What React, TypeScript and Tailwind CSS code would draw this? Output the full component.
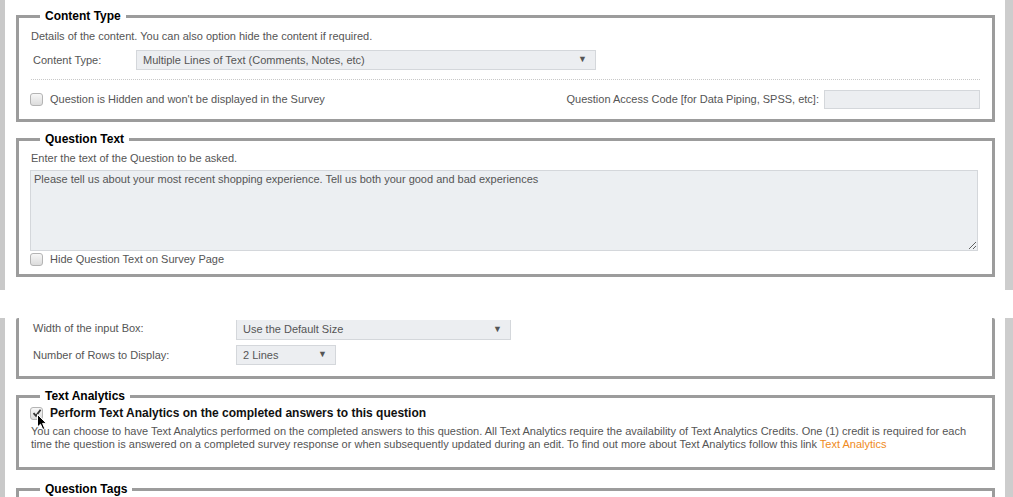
import React from 'react';

const Select = ({ value, width, noTop = false }: { value: string; width: string; noTop?: boolean }) => (
  <div
    className={`${width} ${noTop ? 'border-t-0' : ''} flex h-[20px] items-center justify-between border border-[#d4d7db] bg-[#eceef1] pl-[6px] pr-[8px] text-[11px] text-[#555]`}
  >
    <span>{value}</span>
    <span className="text-[9px] text-[#555]">▼</span>
  </div>
);

const Checkbox = ({ checked = false }: { checked?: boolean }) => (
  <span className="relative flex h-[13px] w-[13px] shrink-0 items-center justify-center rounded-[3px] border border-[#b4b4b4] bg-gradient-to-b from-[#f7f7f7] to-[#dcdcdc]">
    {checked && (
      <svg width="10" height="10" viewBox="0 0 10 10">
        <path d="M1.5 5.2 L4 7.8 L8.6 1.8" fill="none" stroke="#333" strokeWidth="1.8" />
      </svg>
    )}
  </span>
);

const Legend = ({ children }: { children: React.ReactNode }) => (
  <legend className="ml-[9px] px-[5px] text-[12px] font-bold leading-[16px] text-black">{children}</legend>
);

export default function App() {
  return (
    <div className="h-[497px] overflow-hidden bg-white font-['Liberation_Sans',Arial,sans-serif] text-[11px] text-[#555]">
      {/* first capture */}
      <div className="flex h-[290px]">
        <div className="w-[5px] bg-[#c9c9c9]" />
        <div className="ml-[11px] mr-[10px] flex-1 pt-[8px]">
          <fieldset className="border-[3px] border-[#9c9c9c] px-[12px] pb-[10px]">
            <Legend>Content Type</Legend>
            <div className="mt-[4px] leading-[16px]">
              Details of the content. You can also option hide the content if required.
            </div>
            <div className="mt-[6px] flex h-[20px] items-center">
              <span className="ml-[2px] w-[103px]">Content Type:</span>
              <Select value="Multiple Lines of Text (Comments, Notes, etc)" width="w-[460px]" />
            </div>
            <div className="mt-[9px] border-t border-dotted border-[#c8c8c8]" />
            <div className="mt-[9px] flex h-[20px] items-center justify-between">
              <div className="-ml-[1px] flex items-center gap-[7px]">
                <Checkbox />
                <span>Question is Hidden and won't be displayed in the Survey</span>
              </div>
              <div className="flex items-center">
                <span>Question Access Code [for Data Piping, SPSS, etc]:</span>
                <div className="ml-[5px] h-[19px] w-[156px] border border-[#d4d7db] bg-[#eceef1]" />
              </div>
            </div>
          </fieldset>

          <fieldset className="mt-[9px] border-[3px] border-[#9c9c9c] px-[12px] pb-[7px]">
            <Legend>Question Text</Legend>
            <div className="mt-[3px] leading-[16px]">Enter the text of the Question to be asked.</div>
            <textarea
              readOnly
              defaultValue="Please tell us about your most recent shopping experience. Tell us both your good and bad experiences"
              className="-ml-[1px] mt-[4px] block h-[81px] w-[948px] border border-[#d4d7db] bg-[#eceff2] pl-[3px] pt-[1px] text-[11px] leading-[14px] text-[#555] outline-none"
            />
            <div className="-ml-[1px] flex h-[16px] items-center gap-[7px]">
              <Checkbox />
              <span>Hide Question Text on Survey Page</span>
            </div>
          </fieldset>
        </div>
        <div className="w-[8px] bg-[#cdcdcd]" />
      </div>

      {/* second capture */}
      <div className="mt-[28px] flex h-[179px]">
        <div className="w-[5px] bg-[#c9c9c9]" />
        <div className="relative ml-[11px] mr-[10px] flex-1">
          <div className="h-[61px] overflow-hidden rounded-t-[2px] border-x-[3px] border-b-[3px] border-[#9c9c9c] px-[12px] pt-[2px]">
            <div className="flex h-[20px] items-center">
              <span className="ml-[2px] w-[203px] -translate-y-[2px]">Width of the input Box:</span>
              <Select value="Use the Default Size" width="w-[275px]" noTop />
            </div>
            <div className="mt-[5px] flex h-[20px] items-center">
              <span className="ml-[2px] w-[203px]">Number of Rows to Display:</span>
              <Select value="2 Lines" width="w-[100px]" />
            </div>
          </div>

          <fieldset className="mt-[9px] border-[3px] border-[#9c9c9c] px-[12px] pb-[16px]">
            <Legend>Text Analytics</Legend>
            <div className="-ml-[1px] mt-[1px] flex h-[16px] items-center gap-[7px]">
              <Checkbox checked />
              <span className="text-[12px] font-bold text-[#111]">
                Perform Text Analytics on the completed answers to this question
              </span>
            </div>
            <div className="mt-[4px] leading-[13px]">
              You can choose to have Text Analytics performed on the completed answers to this question. All Text
              Analytics require the availability of Text Analytics Credits. One (1) credit is required for each
              <br />
              time the question is answered on a completed survey response or when subsequently updated during an
              edit. To find out more about Text Analytics follow this link{' '}
              <span className="text-[#ef8a22]">Text Analytics</span>
            </div>
          </fieldset>

          <fieldset className="mt-[11px] h-[40px] border-[3px] border-[#9c9c9c] px-[12px]">
            <Legend>Question Tags</Legend>
          </fieldset>

          {/* mouse pointer over the checkbox */}
          <svg className="absolute left-[21px] top-[96px]" width="11" height="17" viewBox="0 0 11 17">
            <path d="M0.5 0.5 L0.5 13 L3.5 10.2 L5.8 15.5 L7.8 14.6 L5.6 9.4 L9.5 9.4 Z" fill="#000" stroke="#fff" strokeWidth="1" />
          </svg>
        </div>
        <div className="w-[8px] bg-[#cdcdcd]" />
      </div>
    </div>
  );
}
